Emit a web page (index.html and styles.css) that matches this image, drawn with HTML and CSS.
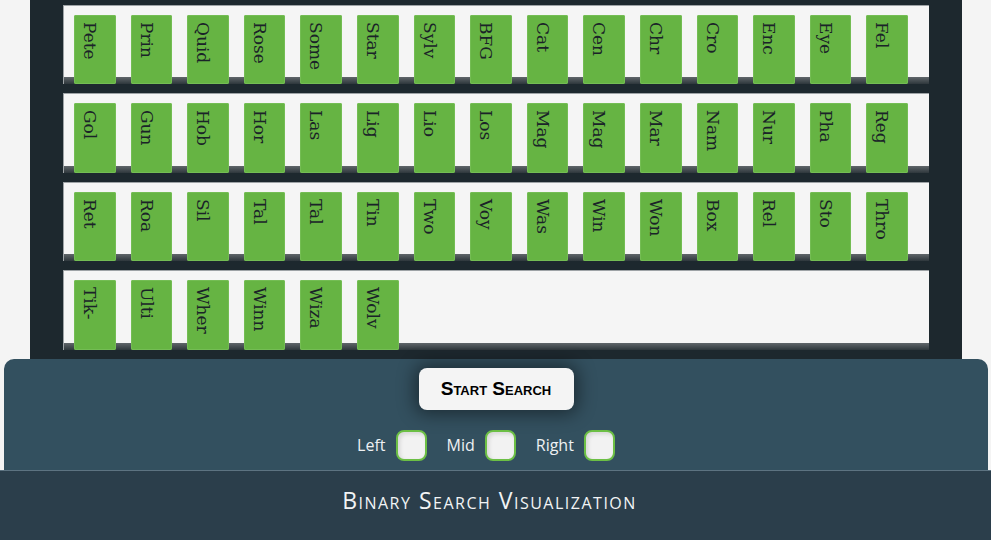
FILE: index.html
```html
<!DOCTYPE html>
<html>
<head>
<meta charset="utf-8">
<link rel="stylesheet" href="styles.css">
</head>
<body>
<div class="bookcase">
  <div class="shelf">
    <div class="book">Pete</div><div class="book">Prin</div><div class="book">Quid</div><div class="book">Rose</div><div class="book">Some</div><div class="book">Star</div><div class="book">Sylv</div><div class="book">BFG</div><div class="book">Cat</div><div class="book">Cen</div><div class="book">Chr</div><div class="book">Cro</div><div class="book">Enc</div><div class="book">Eye</div><div class="book">Fel</div>
  </div>
  <div class="shelf">
    <div class="book">Gol</div><div class="book">Gun</div><div class="book">Hob</div><div class="book">Hor</div><div class="book">Las</div><div class="book">Lig</div><div class="book">Lio</div><div class="book">Los</div><div class="book">Mag</div><div class="book">Mag</div><div class="book">Mar</div><div class="book">Nam</div><div class="book">Nur</div><div class="book">Pha</div><div class="book">Reg</div>
  </div>
  <div class="shelf">
    <div class="book">Ret</div><div class="book">Roa</div><div class="book">Sil</div><div class="book">Tal</div><div class="book">Tal</div><div class="book">Tin</div><div class="book">Two</div><div class="book">Voy</div><div class="book">Was</div><div class="book">Win</div><div class="book">Won</div><div class="book">Box</div><div class="book">Rel</div><div class="book">Sto</div><div class="book">Thro</div>
  </div>
  <div class="shelf">
    <div class="book">Tik-</div><div class="book">Ulti</div><div class="book">Wher</div><div class="book">Winn</div><div class="book">Wiza</div><div class="book">Wolv</div>
  </div>
</div>
<div class="panel">
  <button class="start">Start Search</button>
  <div class="controls">
    <label class="ctl"><span>Left</span><span class="box"></span></label>
    <label class="ctl"><span>Mid</span><span class="box"></span></label>
    <label class="ctl"><span>Right</span><span class="box"></span></label>
  </div>
</div>
<footer class="footer">Binary Search Visualization</footer>
</body>
</html>
```
FILE: styles.css
```css
html, body {
  margin: 0;
  padding: 0;
  background: #f4f4f4;
  overflow: hidden;
  height: 540px;
}
.bookcase {
  margin-left: 30px;
  width: 866px;
  padding: 5px 33px 9px 33px;
  background: #1d282e;
  display: flex;
  flex-direction: column;
  gap: 9px;
}
.shelf {
  display: flex;
  align-items: flex-start;
  height: 69.4px;
  padding: 9px 0 0 10px;
  border-top: 1px solid #9ea3a6;
  border-left: 1px solid #9ea3a6;
  background: linear-gradient(to bottom, #f5f5f5 0, #f5f5f5 calc(100% - 7px), #60666a calc(100% - 7px), #2e373c 100%);
}
.book {
  box-sizing: border-box;
  flex: none;
  width: 41.6px;
  height: 69.4px;
  margin-right: 15px;
  background: #66b443;
  border-radius: 2px;
  box-shadow: inset 0 0 0 1px #74bd54;
  writing-mode: vertical-lr;
  padding: 7px 0 0 6px;
  font-family: "DejaVu Serif", serif;
  font-size: 17px;
  line-height: 19px;
  color: #1a2328;
}
.panel {
  margin-left: 4px;
  width: 984px;
  height: 111px;
  background: #33505f;
  border-radius: 10px 10px 0 0;
  display: flex;
  flex-direction: column;
  align-items: center;
  padding-top: 9px;
  box-sizing: border-box;
}
.start {
  width: 155px;
  height: 42px;
  border: none;
  border-radius: 8px;
  background: #f4f4f4;
  box-shadow: 0 0 18px 4px rgba(0, 0, 0, 0.45);
  font-family: "Liberation Sans", Arial, sans-serif;
  font-weight: bold;
  font-size: 19px;
  font-variant: small-caps;
  color: #000;
  padding: 0;
}
.controls {
  display: flex;
  margin-top: 20px;
}
.ctl {
  display: flex;
  align-items: center;
  gap: 10px;
  margin-right: 20px;
  font-family: "Open Sans", sans-serif;
  font-size: 16px;
  color: #eef1f3;
}
.box {
  width: 27px;
  height: 27px;
  border: 2px solid #6cbf45;
  border-radius: 8px;
  background: #f2f2f2;
  box-shadow: inset 2px 2px 4px rgba(0, 0, 0, 0.12);
}
.footer {
  height: 70px;
  box-sizing: border-box;
  border-top: 1px solid #5d7381;
  background: #2b3e4b;
  color: #f2f4f5;
  font-family: "Open Sans", sans-serif;
  font-size: 23px;
  letter-spacing: 1.5px;
  font-variant: small-caps;
  display: flex;
  align-items: center;
  justify-content: center;
  padding-bottom: 10px;
  padding-right: 12px;
}
```
